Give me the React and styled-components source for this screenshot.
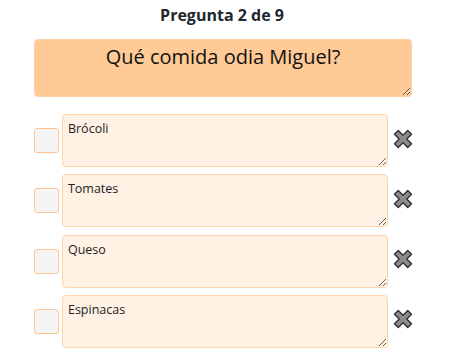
import React from "react";
import styled, { createGlobalStyle } from "styled-components";

const options = ["Brócoli", "Tomates", "Queso", "Espinacas"];

const GlobalStyle = createGlobalStyle`
  body {
    margin: 0;
    background: #ffffff;
    font-family: "Open Sans", "Noto Sans", sans-serif;
  }
`;

const RemoveIcon = () => (
  <svg width="20" height="20" viewBox="0 0 20 20">
    <polygon
      transform="rotate(45 10 10)"
      points="7.3,0.6 12.7,0.6 12.7,7.3 19.4,7.3 19.4,12.7 12.7,12.7 12.7,19.4 7.3,19.4 7.3,12.7 0.6,12.7 0.6,7.3 7.3,7.3"
      fill="#8c8c8c"
      stroke="#2e2e2e"
      strokeWidth="1.3"
      strokeLinejoin="round"
    />
  </svg>
);

const App = () => {
  return (
    <>
      <GlobalStyle />
      <QuizS>
        <TitleS>Pregunta 2 de 9</TitleS>
        <QuestionS readOnly defaultValue="Qué comida odia Miguel?" />
        <OptionListS>
          {options.map((option) => (
            <OptionRowS key={option}>
              <CheckS type="button" aria-label="correcta" />
              <AnswerS readOnly defaultValue={option} />
              <DeleteS type="button" aria-label="eliminar">
                <RemoveIcon />
              </DeleteS>
            </OptionRowS>
          ))}
        </OptionListS>
      </QuizS>
    </>
  );
};

export default App;

const QuizS = styled.div`
  width: 379px;
  margin-left: 34px;
  display: flex;
  flex-direction: column;
`;

const TitleS = styled.h2`
  margin: 4px 0 0;
  height: 35px;
  font-size: 16px;
  line-height: 22px;
  font-weight: 700;
  color: #22272e;
  text-align: center;
  padding-right: 3px;
`;

const QuestionS = styled.textarea`
  box-sizing: border-box;
  width: 378px;
  height: 58px;
  margin: 0;
  padding: 3px 8px;
  background: #ffca95;
  border: 1px solid #ffd2a6;
  border-radius: 4px;
  font-family: "Open Sans", "Noto Sans", sans-serif;
  font-size: 20px;
  line-height: 27px;
  color: #111111;
  text-align: center;
  outline: none;
`;

const OptionListS = styled.div`
  margin-top: 17px;
  display: flex;
  flex-direction: column;
  gap: 7.33px;
`;

const OptionRowS = styled.div`
  display: flex;
  align-items: center;
`;

const CheckS = styled.button`
  box-sizing: border-box;
  width: 25px;
  height: 25px;
  padding: 0;
  margin: 0 3px 0 0;
  background: #f5f5f5;
  border: 1px solid #ffc490;
  border-radius: 3px;
`;

const AnswerS = styled.textarea`
  box-sizing: border-box;
  width: 327px;
  height: 53px;
  margin: 0;
  padding: 5px 5px;
  background: #fff1e4;
  border: 1px solid #ffd4a9;
  border-radius: 4px;
  font-family: "Open Sans", "Noto Sans", sans-serif;
  font-size: 12.5px;
  line-height: 17px;
  color: #1e1e1e;
  outline: none;
`;

const DeleteS = styled.button`
  width: 21px;
  height: 21px;
  margin: 0 0 4px 4px;
  padding: 0;
  border: none;
  background: none;
  display: flex;
  align-items: center;
  justify-content: center;
`;
